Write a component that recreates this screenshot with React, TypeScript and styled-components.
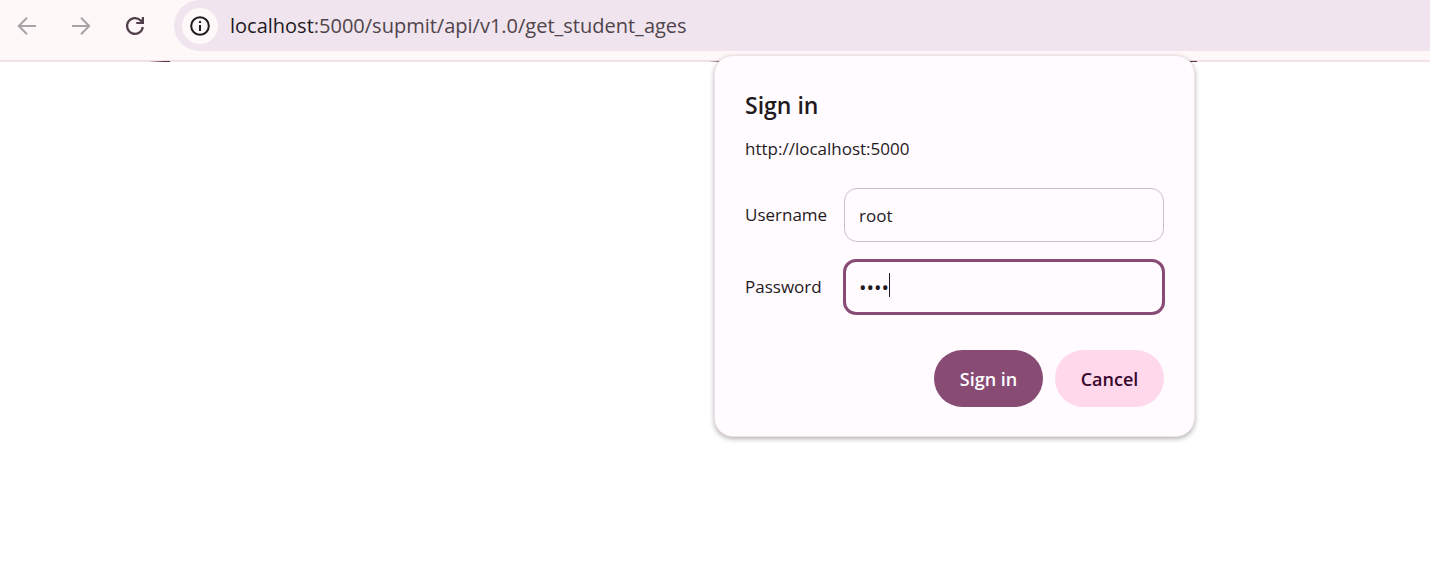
import React from "react";
import styled, { createGlobalStyle } from "styled-components";

const GlobalStyle = createGlobalStyle`
  * { box-sizing: border-box; }
  body {
    margin: 0;
    background: #ffffff;
    color: #1f1a1d;
    font-family: "Segoe UI", "Open Sans", "Noto Sans", sans-serif;
  }
`;

const Window = styled.div`
  position: relative;
  min-height: 100vh;
  overflow: hidden;
`;

const Toolbar = styled.header`
  display: flex;
  align-items: flex-start;
  height: 62px;
  padding-left: 9px;
  background: #fff8f8;
  border-bottom: 1px solid #efe6ec;
  box-shadow: inset 0 -1px #f5dde5;
`;

const NavGroup = styled.nav`
  display: flex;
  gap: 18px;
  height: 52px;
  align-items: center;
`;

const NavButton = styled.button<{ $active?: boolean }>`
  display: grid;
  place-items: center;
  width: 36px;
  height: 36px;
  padding: 0;
  border: 0;
  border-radius: 50%;
  background: none;
  color: ${(p) => (p.$active ? "#51404b" : "#a9a3a6")};
`;

const Omnibox = styled.div`
  display: flex;
  flex: 1;
  align-items: center;
  gap: 12px;
  height: 51px;
  margin-left: 21px;
  padding-left: 8px;
  border-radius: 26px 0 0 26px;
  background: #f0e4ee;
`;

const SiteInfo = styled.button`
  display: grid;
  flex: none;
  place-items: center;
  width: 36px;
  height: 36px;
  padding: 0;
  border: 0;
  border-radius: 50%;
  background: #fff8f8;
  color: #1f1a1d;
`;

const Address = styled.div`
  color: #4f444b;
  font-size: 20px;
  line-height: 28px;
  white-space: nowrap;
`;

const Host = styled.span`
  color: #1f1a1d;
`;

const PageEdge = styled.div<{ $left: number; $width: number }>`
  position: absolute;
  top: 61px;
  left: ${(p) => p.$left}px;
  width: ${(p) => p.$width}px;
  height: 1px;
  background: linear-gradient(90deg, transparent, #55394b 16px);
`;

const Dialog = styled.form`
  position: absolute;
  top: 55px;
  left: 714px;
  width: 481px;
  padding: 32px 30px 29px;
  border: 1px solid #efe2e8;
  border-radius: 19px;
  background: #fffbff;
  box-shadow: 0 2px 5px rgba(0, 0, 0, 0.3);
`;

const Title = styled.h1`
  margin: 0;
  font-size: 23px;
  font-weight: 600;
  line-height: 34px;
`;

const Origin = styled.p`
  margin: 15px 0 27px;
  font-size: 17px;
  line-height: 24px;
`;

const Field = styled.div`
  display: flex;
  align-items: center;
  margin-bottom: 18px;
`;

const Label = styled.label`
  flex: 1;
  font-size: 17px;
  line-height: 24px;
`;

const InputWrap = styled.div`
  position: relative;
  display: flex;
  width: 320px;
  height: 54px;
`;

const Input = styled.input<{ $focused?: boolean }>`
  flex: 1;
  min-width: 0;
  margin: ${(p) => (p.$focused ? "-1px" : "0")};
  padding: 0 ${(p) => (p.$focused ? 13 : 14)}px;
  border: ${(p) => (p.$focused ? "3px solid #884b76" : "1px solid #cdbdc6")};
  border-radius: 13px;
  outline: none;
  background: transparent;
  color: #1f1a1d;
  caret-color: transparent;
  font-family: inherit;
  font-size: ${(p) => (p.type === "password" ? 20 : 17)}px;
`;

const Caret = styled.span`
  position: absolute;
  top: 13px;
  left: 45px;
  width: 1px;
  height: 24px;
  background: #1f1a1d;
`;

const Actions = styled.div`
  display: flex;
  justify-content: flex-end;
  gap: 12px;
  margin-top: 36px;
`;

const Button = styled.button<{ $primary?: boolean }>`
  width: 109px;
  height: 57px;
  padding: 0;
  border: 0;
  border-radius: 29px;
  background: ${(p) => (p.$primary ? "#884b74" : "#ffd8eb")};
  color: ${(p) => (p.$primary ? "#ffffff" : "#37072d")};
  font-family: inherit;
  font-size: 18px;
  font-weight: 600;
`;

const ArrowIcon = ({ forward }: { forward?: boolean }) => (
  <svg width="20" height="20" viewBox="0 0 20 20" fill="none" stroke="currentColor" strokeWidth="2" aria-hidden="true">
    <path d={forward ? "M1 10H18M10 1.8L18.2 10L10 18.2" : "M19 10H2M10 1.8L1.8 10L10 18.2"} />
  </svg>
);

const ReloadIcon = () => (
  <svg width="20" height="20" viewBox="0 0 20 20" fill="none" stroke="currentColor" strokeWidth="2.2" aria-hidden="true">
    <path d="M17.8 11A7.9 7.9 0 1 1 15.6 4.4L17.5 6.3" />
    <path d="M17.9 1V7H11.3" />
    <path d="M15.5 4.5L17.5 2.8V6.5Z" fill="currentColor" stroke="none" />
  </svg>
);

const InfoIcon = () => (
  <svg width="20" height="20" viewBox="0 0 20 20" fill="none" stroke="currentColor" strokeWidth="2" aria-hidden="true">
    <circle cx="10" cy="10" r="8.8" />
    <path d="M10 9V15M10 5V7" />
  </svg>
);

export default function App() {
  return (
    <>
      <GlobalStyle />
      <Window>
        <Toolbar>
          <NavGroup aria-label="Browser navigation">
            <NavButton type="button" aria-label="Back"><ArrowIcon /></NavButton>
            <NavButton type="button" aria-label="Forward"><ArrowIcon forward /></NavButton>
            <NavButton type="button" aria-label="Reload" $active><ReloadIcon /></NavButton>
          </NavGroup>
          <Omnibox>
            <SiteInfo type="button" aria-label="View site information"><InfoIcon /></SiteInfo>
            <Address><Host>localhost</Host>:5000/supmit/api/v1.0/get_student_ages</Address>
          </Omnibox>
        </Toolbar>
        <PageEdge $left={148} $width={22} />
        <PageEdge $left={708} $width={489} />
        <Dialog aria-labelledby="title" onSubmit={(e) => e.preventDefault()}>
          <Title id="title">Sign in</Title>
          <Origin>http://localhost:5000</Origin>
          <Field>
            <Label htmlFor="username">Username</Label>
            <InputWrap>
              <Input id="username" type="text" defaultValue="root" />
            </InputWrap>
          </Field>
          <Field>
            <Label htmlFor="password">Password</Label>
            <InputWrap>
              <Input id="password" type="password" defaultValue="root" $focused />
              <Caret />
            </InputWrap>
          </Field>
          <Actions>
            <Button type="submit" $primary>Sign in</Button>
            <Button type="button">Cancel</Button>
          </Actions>
        </Dialog>
      </Window>
    </>
  );
}
